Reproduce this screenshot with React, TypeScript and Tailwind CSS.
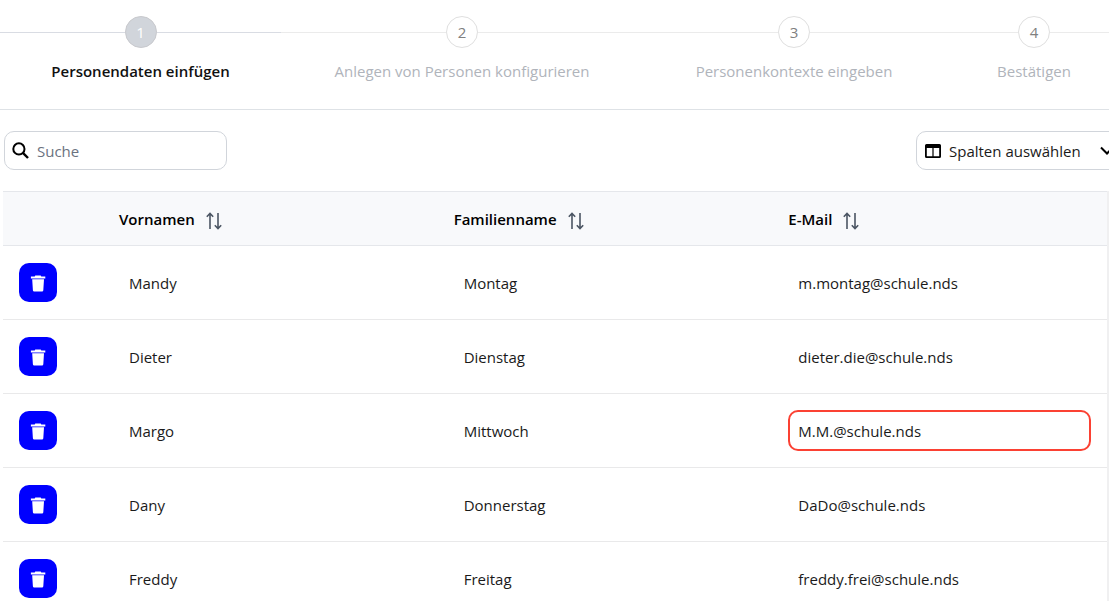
import { useState } from "react";

type Person = {
  firstName: string;
  lastName: string;
  email: string;
  invalid?: boolean;
};

const steps = [
  "Personendaten einfügen",
  "Anlegen von Personen konfigurieren",
  "Personenkontexte eingeben",
  "Bestätigen",
];

const initialPeople: Person[] = [
  { firstName: "Mandy", lastName: "Montag", email: "m.montag@schule.nds" },
  { firstName: "Dieter", lastName: "Dienstag", email: "dieter.die@schule.nds" },
  { firstName: "Margo", lastName: "Mittwoch", email: "M.M.@schule.nds", invalid: true },
  { firstName: "Dany", lastName: "Donnerstag", email: "DaDo@schule.nds" },
  { firstName: "Freddy", lastName: "Freitag", email: "freddy.frei@schule.nds" },
];

function SearchIcon() {
  return (
    <svg viewBox="0 0 17 17" className="h-[17px] w-[17px] shrink-0" fill="none" stroke="currentColor" aria-hidden="true">
      <circle cx="6.9" cy="6.9" r="5.6" strokeWidth="2" />
      <path d="M10.900 10.900 16 16" strokeWidth="2.4" />
    </svg>
  );
}

function ColumnsIcon() {
  return (
    <svg viewBox="0 0 16 14" className="h-[14px] w-4 shrink-0" fill="currentColor" aria-hidden="true">
      <path
        fillRule="evenodd"
        d="M1.500 0h13A1.500 1.500 0 0 1 16 1.500v11a1.500 1.500 0 0 1-1.500 1.500h-13A1.500 1.500 0 0 1 0 12.500v-11A1.500 1.500 0 0 1 1.500 0ZM1.800 4V12.300H7.400V4ZM8.600 4V12.300H14.200V4Z"
      />
    </svg>
  );
}

function ChevronIcon() {
  return (
    <svg viewBox="0 0 14 10" className="h-[10px] w-[14px] shrink-0" fill="none" stroke="currentColor" aria-hidden="true">
      <path d="M1 1.500 7 7.500 13 1.500" strokeWidth="2" />
    </svg>
  );
}

function SortIcon() {
  return (
    <svg viewBox="0 0 16 18" className="h-[18px] w-4" fill="none" stroke="currentColor" aria-hidden="true">
      <path d="M4 17V1.500M.8 4.700 4 1.500 7.200 4.700" strokeWidth="1.600" />
      <path d="M12 1V16.500M8.800 13.300 12 16.500 15.200 13.300" strokeWidth="1.600" />
    </svg>
  );
}

function TrashIcon() {
  return (
    <svg viewBox="0 0 16 18" className="h-[18px] w-4" fill="currentColor" aria-hidden="true">
      <path d="M5.300 1.500h5.400l.6.900H15.300v2H.9v-2h3.800Z" />
      <path d="M2.200 5.300h11.800l-.7 11a1.300 1.300 0 0 1-1.300 1.200H4.200a1.300 1.300 0 0 1-1.300-1.200Z" />
    </svg>
  );
}

function SortableHeader({ label }: { label: string }) {
  return (
    <th scope="col" className="px-4 text-left font-semibold">
      <div className="flex items-center gap-[11px]">
        {label}
        <button type="button" aria-label={`${label} sortieren`} className="pt-1 text-[#4b5563]">
          <SortIcon />
        </button>
      </div>
    </th>
  );
}

function EditableCell({
  label,
  value,
  invalid,
  onChange,
}: {
  label: string;
  value: string;
  invalid?: boolean;
  onChange: (value: string) => void;
}) {
  return (
    <td className="px-4">
      <input
        type="text"
        aria-label={label}
        aria-invalid={invalid}
        value={value}
        onChange={(e) => onChange(e.target.value)}
        className={`block h-[41px] w-full rounded-[10px] border-2 bg-transparent px-2 outline-none ${
          invalid ? "border-[#fb4133]" : "border-transparent"
        }`}
      />
    </td>
  );
}

export default function App() {
  const [people, setPeople] = useState(initialPeople);
  const [search, setSearch] = useState("");

  function update(index: number, patch: Partial<Person>) {
    setPeople((prev) => prev.map((p, i) => (i === index ? { ...p, ...patch } : p)));
  }

  function remove(index: number) {
    setPeople((prev) => prev.filter((_, i) => i !== index));
  }

  return (
    <div className="flex h-screen flex-col overflow-hidden bg-white font-['Segoe_UI','Open_Sans',sans-serif] text-[15px] leading-6 text-[#1a1a1a]">
      <nav aria-label="Schritte" className="border-b border-[#dee2e6] pt-4 pb-[26px]">
        <ol className="-mr-[14px] grid grid-cols-[281fr_362fr_302fr_178fr]">
          {steps.map((step, i) => (
            <li key={step} aria-current={i === 0 ? "step" : undefined} className="flex flex-col items-center gap-[11px]">
              <div className="flex w-full items-center">
                <span className={`h-px flex-1 ${i === 0 ? "bg-[#d9dce3]" : "bg-[#ebebeb]"}`} />
                <span
                  className={`flex h-8 w-8 items-center justify-center rounded-full border ${
                    i === 0 ? "border-[#c8c9cd] bg-[#d1d5db] text-white" : "border-[#dfdfdf] bg-white text-[#808080]"
                  }`}
                >
                  {i + 1}
                </span>
                <span className={`h-px flex-1 ${i === 0 ? "bg-[#d9dce3]" : "bg-[#ebebeb]"}`} />
              </div>
              <span className={`whitespace-nowrap ${i === 0 ? "font-semibold text-[#111111]" : "text-[#b0b4bb]"}`}>
                {step}
              </span>
            </li>
          ))}
        </ol>
      </nav>

      <div className="-mr-[14px] flex items-center justify-between py-[21px] pl-1">
        <label className="flex h-[39px] w-[223px] items-center gap-2 rounded-[10px] border border-[#d1d5db] px-[7px] text-black">
          <SearchIcon />
          <input
            type="search"
            aria-label="Suche"
            placeholder="Suche"
            value={search}
            onChange={(e) => setSearch(e.target.value)}
            className="w-full min-w-0 bg-transparent outline-none placeholder:text-[#6b7280]"
          />
        </label>
        <button
          type="button"
          className="flex h-[39px] w-[207px] items-center gap-2 rounded-[10px] border border-[#d1d5db] px-2 text-black"
        >
          <ColumnsIcon />
          <span className="flex-1 text-left whitespace-nowrap text-[#1a1a1a]">Spalten auswählen</span>
          <ChevronIcon />
        </button>
      </div>

      <div className="ml-[3px] min-h-0 flex-1 overflow-hidden border-r-2 border-[#f0f0f1]">
        <table className="w-full table-fixed border-collapse">
          <colgroup>
            <col className="w-[100px]" />
            <col />
            <col />
            <col />
          </colgroup>
          <thead>
            <tr className="h-[54px] border-y border-[#e5e7eb] bg-[#f8f9fb] text-black">
              <td />
              <SortableHeader label="Vornamen" />
              <SortableHeader label="Familienname" />
              <SortableHeader label="E-Mail" />
            </tr>
          </thead>
          <tbody>
            {people.map((person, i) => (
              <tr key={i} className="h-[74px] border-b border-[#e9e9ea]">
                <td className="px-4">
                  <button
                    type="button"
                    aria-label={`${person.firstName} löschen`}
                    onClick={() => remove(i)}
                    className="flex h-[39px] w-[38px] items-center justify-center rounded-[10px] bg-[#0000ff] text-white"
                  >
                    <TrashIcon />
                  </button>
                </td>
                <EditableCell
                  label="Vornamen"
                  value={person.firstName}
                  onChange={(firstName) => update(i, { firstName })}
                />
                <EditableCell
                  label="Familienname"
                  value={person.lastName}
                  onChange={(lastName) => update(i, { lastName })}
                />
                <EditableCell
                  label="E-Mail"
                  value={person.email}
                  invalid={person.invalid}
                  onChange={(email) => update(i, { email })}
                />
              </tr>
            ))}
          </tbody>
        </table>
      </div>
    </div>
  );
}
